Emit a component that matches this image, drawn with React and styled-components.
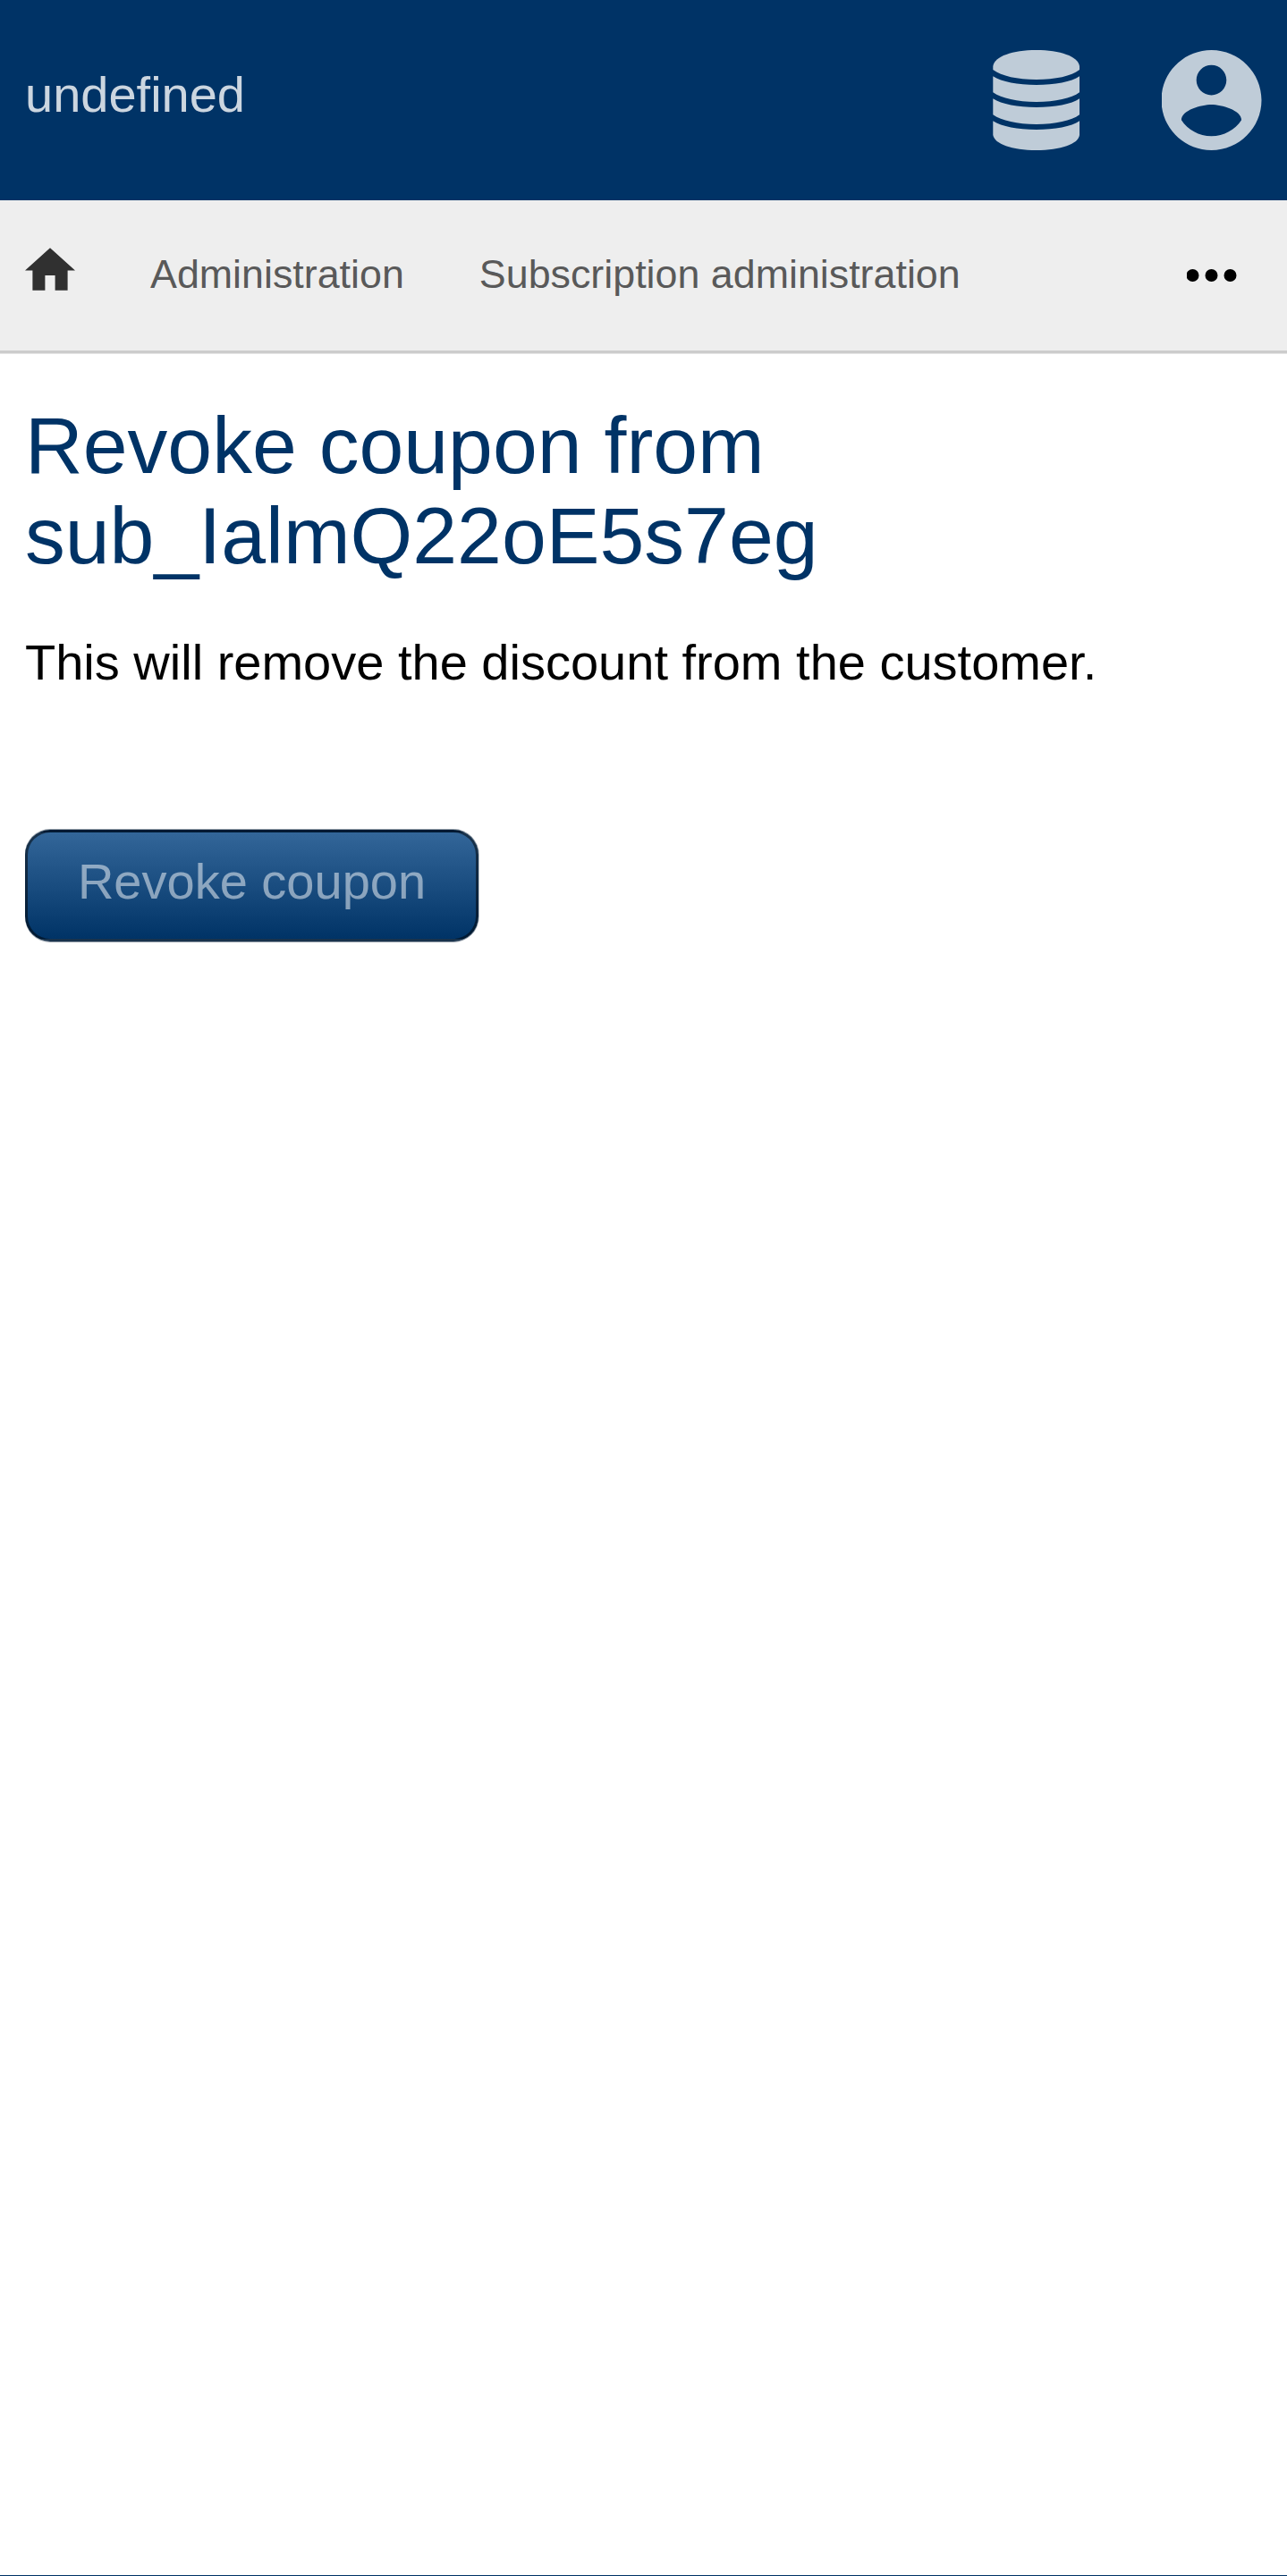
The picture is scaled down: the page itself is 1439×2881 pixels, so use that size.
import React from "react";
import styled, { createGlobalStyle } from "styled-components";

const Global = createGlobalStyle`
  body { margin: 0; background: #fff; font-family: "Liberation Sans", Arial, sans-serif; font-size: 56px; }
  *, *::before, *::after { box-sizing: border-box; }
`;
const Page = styled.div`
  display: flex;
  flex-direction: column;
  height: 2881px;
  overflow: hidden;
  border-bottom: 1px solid #003366;
`;
const Header = styled.header`
  display: flex;
  align-items: center;
  justify-content: space-between;
  height: 224px;
  padding: 0 28px;
  background: #003366;
`;
const Brand = styled.a`
  color: #ccd6e0;
  line-height: 64px;
  padding-bottom: 12px;
`;
const Actions = styled.div`
  display: flex;
  align-items: center;
  gap: 91px;
`;
const Icon = styled.svg`
  display: block;
  flex: none;
  width: ${(p) => p.$w}px;
  height: ${(p) => p.$h}px;
  fill: ${(p) => p.$color};
`;
const Nav = styled.nav`
  display: flex;
  align-items: flex-start;
  height: 171px;
  padding: 0 56px 0 28px;
  background: #eee;
  border-bottom: 3px solid #ccc;
  box-shadow: 0 1px 0 #e5e5e5;
`;
const HomeLink = styled.a`
  padding-top: 53px;
  margin-right: 84px;
`;
const NavLink = styled.a`
  padding-top: 56px;
  margin-right: 84px;
  font-size: 44.8px;
  line-height: 52px;
  color: #595959;
  white-space: nowrap;
`;
const More = styled.a`
  margin-left: auto;
  padding-top: 77px;
`;
const Main = styled.main`
  padding: 53px 28px 0;
`;
const Title = styled.h1`
  margin: 0;
  font-size: 89.6px;
  font-weight: 400;
  line-height: 101px;
  color: #003366;
`;
const Text = styled.p`
  margin: 59px 0 0;
  line-height: 64px;
`;
const Submit = styled.button`
  display: block;
  margin-top: 155px;
  width: 507px;
  height: 125px;
  padding: 0 0 9px;
  border: 3px solid rgba(0, 0, 0, 0.5);
  border-radius: 28px;
  background: linear-gradient(#336699, #003366);
  box-shadow: 0 -1px 0 rgba(0, 26, 51, 0.4), 0 1px 0 rgba(0, 26, 51, 0.4), 1px 0 0 rgba(0, 26, 51, 0.25);
  font: inherit;
  line-height: 64px;
  color: rgba(255, 255, 255, 0.5);
`;

export default function App() {
  return (
    <>
      <Global />
      <Page>
        <Header>
          <Brand>undefined</Brand>
          <Actions>
            <Icon $w={98} $h={112} $color="#bfccd8" viewBox="0 0 98 112">
              <path d="M.3 18C2 7 22 0 48.700 0S95.400 7 97 18v4C88 29 70 33 48.700 33S10 29 .3 22z" />
              <path d="M.3 29.300C10 35.500 28 39 48.700 39S88 35.500 97 29.300V47.300C88 54 70 58 48.700 58S10 54 .3 47.300z" />
              <path d="M.3 54.300C10 60.500 28 64 48.700 64S88 60.500 97 54.300V72.300C88 79 70 83 48.700 83S10 79 .3 72.300z" />
              <path d="M.3 79.300C10 85.500 28 89 48.700 89S88 85.500 97 79.300V95C96 105 76 112 48.700 112S2 105 .3 95z" />
            </Icon>
            <Icon $w={112} $h={112} $color="#bfccd8" viewBox="2.09 2 20 20">
              <path d="M12 2C6.48 2 2 6.48 2 12s4.480 10 10 10 10-4.480 10-10S17.520 2 12 2zm0 3c1.660 0 3 1.340 3 3s-1.340 3-3 3-3-1.340-3-3 1.340-3 3-3zm0 14.200c-2.500 0-4.710-1.280-6-3.220.03-1.990 4-3.080 6-3.080 1.990 0 5.970 1.090 6 3.080-1.290 1.940-3.500 3.220-6 3.220z" />
            </Icon>
          </Actions>
        </Header>
        <Nav>
          <HomeLink>
            <Icon $w={56} $h={48} $color="#303030" viewBox="2 3 20 17">
              <path d="M10 20v-6h4v6h5v-8h3L12 3 2 12h3v8z" />
            </Icon>
          </HomeLink>
          <NavLink>Administration</NavLink>
          <NavLink>Subscription administration</NavLink>
          <More>
            <Icon $w={56} $h={14} $color="#000" viewBox="0.5 0 56 14">
              <circle cx="7" cy="7" r="7" />
              <circle cx="28" cy="7" r="7" />
              <circle cx="49" cy="7" r="7" />
            </Icon>
          </More>
        </Nav>
        <Main>
          <Title>
            Revoke coupon from
            <br />
            sub_IalmQ22oE5s7eg
          </Title>
          <Text>This will remove the discount from the customer.</Text>
          <Submit type="button">Revoke coupon</Submit>
        </Main>
      </Page>
    </>
  );
}
